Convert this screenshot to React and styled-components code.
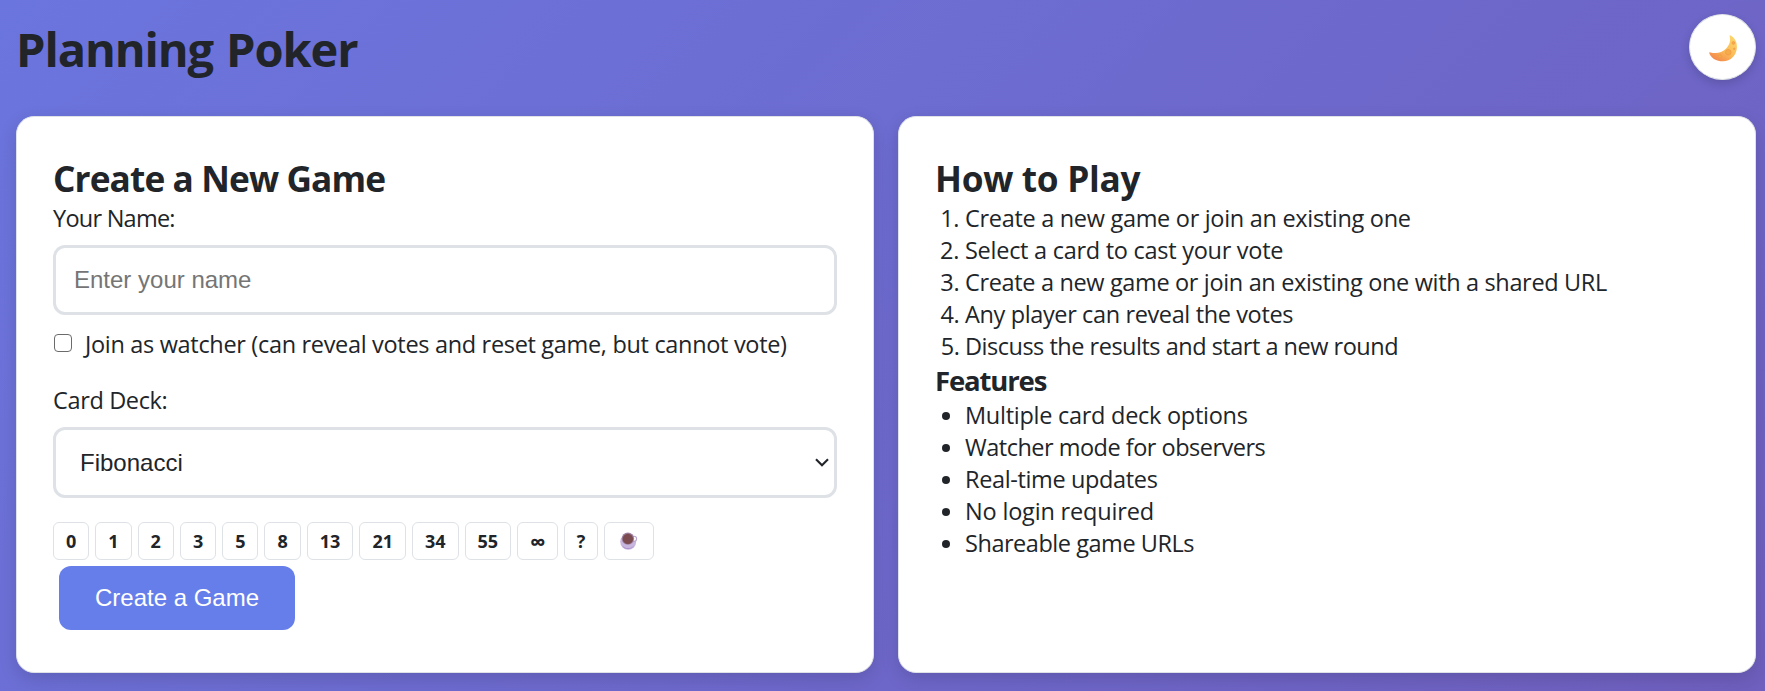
import React from 'react';
import styled, { createGlobalStyle } from 'styled-components';

const GlobalStyle = createGlobalStyle`
  *, *::before, *::after { box-sizing: border-box; }
  body {
    margin: 0;
    font-family: "Open Sans", "Noto Sans", sans-serif;
    font-size: 23.5px;
    line-height: 32px;
    color: #212529;
  }
`;

const Page = styled.main`
  min-height: 691px;
  padding: 14px 9px 18px 16px;
  background: linear-gradient(135deg, #6b75de 0%, #6f5fbe 100%);
`;

const Header = styled.header`
  display: flex;
  justify-content: space-between;
  height: 66px;
  margin-bottom: 36px;
`;

const Title = styled.h1`
  margin: 3px 0 0;
  font-size: 47px;
  line-height: 64px;
  font-weight: 700;
  letter-spacing: -1.1px;
  word-spacing: 2px;
`;

const ThemeButton = styled.button`
  display: flex;
  align-items: center;
  justify-content: center;
  width: 67px;
  height: 66px;
  padding: 0;
  border: 1px solid #dee2e6;
  border-radius: 50%;
  background: #fff;
  box-shadow: 0 4px 10px rgba(0, 0, 0, 0.15);
`;

const Columns = styled.div`
  display: grid;
  grid-template-columns: 1fr 1fr;
  gap: 24px;
`;

const Card = styled.section`
  height: 557px;
  padding: 37px 36px 36px;
  border: 1px solid #dee2e6;
  border-radius: 18px;
  background: #fff;
  box-shadow: 0 6px 18px rgba(0, 0, 0, 0.13);
`;

const Heading = styled.h2`
  margin: 0;
  font-size: 35.25px;
  line-height: 48px;
  letter-spacing: ${(p) => p.$track}px;
`;

const SubHeading = styled.h3`
  margin: 0;
  font-size: 27.5px;
  line-height: 37px;
  letter-spacing: -1.15px;
`;

const Label = styled.label`
  display: block;
  margin-bottom: 11px;
  letter-spacing: ${(p) => p.$track}px;
`;

const NameInput = styled.input`
  display: block;
  width: 100%;
  height: 70px;
  padding: 0 18px;
  border: 3px solid #dee2e6;
  border-radius: 12px;
  background: #fff;
  font: 24px "Liberation Sans", sans-serif;
  &::placeholder { color: #757575; }
`;

const WatcherRow = styled.label`
  display: flex;
  align-items: flex-start;
  margin: 13px 0 24px;
  letter-spacing: -0.32px;
  white-space: nowrap;
`;

const Checkbox = styled.input`
  appearance: none;
  width: 18px;
  height: 18px;
  margin: 6px 13px 0 1px;
  border: 1px solid #6b6b6b;
  border-radius: 4px;
  background: #fff;
`;

const SelectBox = styled.div`
  display: grid;
  align-items: center;
  margin-bottom: 24px;
  > * { grid-area: 1 / 1; }
  > svg { justify-self: end; margin-right: 8px; pointer-events: none; }
`;

const Select = styled.select`
  appearance: none;
  width: 100%;
  height: 71px;
  padding: 0 24px;
  border: 3px solid #dee2e6;
  border-radius: 12px;
  background: #fff;
  color: #212529;
  font: 24px "Liberation Sans", sans-serif;
`;

const Deck = styled.div`
  display: flex;
  gap: 6px;
  margin-bottom: 6px;
`;

const Chip = styled.span`
  display: flex;
  align-items: center;
  justify-content: center;
  width: ${(p) => (p.$width ? `${p.$width}px` : 'auto')};
  height: 38px;
  padding: ${(p) => (p.$width ? '0' : '0 12px')};
  border: 1px solid #dee2e6;
  border-radius: 6px;
  font-size: ${(p) => p.$size || 18}px;
  line-height: 36px;
  font-weight: 700;
`;

const CreateButton = styled.button`
  display: block;
  width: 236px;
  height: 64px;
  margin: 6px;
  padding: 0;
  border: 0;
  border-radius: 12px;
  background: #667eea;
  color: #fff;
  font: 24px "Liberation Sans", sans-serif;
`;

const listStyles = `
  margin: 0;
  padding-left: 30px;
`;
const Steps = styled.ol`${listStyles}`;
const Features = styled.ul`${listStyles}`;

const Item = styled.li`
  letter-spacing: ${(p) => p.$track}px;
`;

function Moon() {
  return (
    <svg width="30" height="30" viewBox="0 0 30 30">
      <defs>
        <linearGradient id="moon" x1="0.9" y1="0.1" x2="0.3" y2="1">
          <stop offset="0" stopColor="#fdd36b" />
          <stop offset="0.55" stopColor="#fbbb57" />
          <stop offset="1" stopColor="#f3894d" />
        </linearGradient>
      </defs>
      <path d="M22.4 3.4C26.3 5.2 29.2 9.6 28.9 15.2C28.6 23.4 22.6 29.2 15.2 29.3C8.5 29.4 3.2 26.6 1.2 21C1.1 20.2 1.7 20.1 2.5 20.4C8.2 22 14.2 20.6 18 16.8C21.6 13.2 22.9 8.6 21.6 4.1C21.5 3.5 21.9 3.2 22.4 3.4Z" fill="url(#moon)" />
      <g fill="#f6ab4a" stroke="#ef9a45" strokeWidth="0.7">
        <circle cx="20.3" cy="20.3" r="2.8" />
        <circle cx="25.4" cy="11" r="1.4" />
        <circle cx="12" cy="24.2" r="1.4" />
        <circle cx="26.2" cy="16.8" r="0.8" />
      </g>
    </svg>
  );
}

function Cup() {
  return (
    <svg width="18" height="18" viewBox="0 0 18 18">
      <circle cx="8.2" cy="9.8" r="8" fill="#c9b6de" />
      <path d="M2.2 13.2C5 17 11.5 17 14 13.2C12.5 18 4 18.6 2.2 13.2Z" fill="#a98fcd" />
      <circle cx="14" cy="6.8" r="2.6" fill="#fff" stroke="#b9a6cf" strokeWidth="1.1" />
      <circle cx="7.9" cy="6.6" r="6.2" fill="#9c7f9f" />
      <circle cx="7.9" cy="6.9" r="5.2" fill="#7c4b50" />
    </svg>
  );
}

const cards = ['0', '1', '2', '3', '5', '8', '13', '21', '34', '55'];

const steps = [
  ['Create a new game or join an existing one', -0.305],
  ['Select a card to cast your vote', -0.27],
  ['Create a new game or join an existing one with a shared URL', -0.347],
  ['Any player can reveal the votes', -0.373],
  ['Discuss the results and start a new round', -0.49],
];

const features = [
  ['Multiple card deck options', -0.27],
  ['Watcher mode for observers', -0.5],
  ['Real-time updates', -0.36],
  ['No login required', -0.18],
  ['Shareable game URLs', -0.46],
];

export default function App() {
  return (
    <>
      <GlobalStyle />
      <Page>
        <Header>
          <Title>Planning Poker</Title>
          <ThemeButton aria-label="Dark mode"><Moon /></ThemeButton>
        </Header>
        <Columns>
          <Card>
            <Heading $track={-0.9}>Create a New Game</Heading>
            <Label htmlFor="name" $track={-0.75}>Your Name:</Label>
            <NameInput id="name" placeholder="Enter your name" />
            <WatcherRow>
              <Checkbox type="checkbox" />
              Join as watcher (can reveal votes and reset game, but cannot vote)
            </WatcherRow>
            <Label htmlFor="deck" $track={-0.36}>Card Deck:</Label>
            <SelectBox>
              <Select id="deck"><option>Fibonacci</option></Select>
              <svg width="14" height="9" viewBox="0 0 14 9" fill="none" stroke="#212529" strokeWidth="2.1">
                <path d="M1 1.2L7 7.2L13 1.2" />
              </svg>
            </SelectBox>
            <Deck>
              {cards.map((c) => <Chip key={c}>{c}</Chip>)}
              <Chip $width={41} $size={22}>∞</Chip>
              <Chip $width={34}>?</Chip>
              <Chip $width={50}><Cup /></Chip>
            </Deck>
            <CreateButton>Create a Game</CreateButton>
          </Card>
          <Card>
            <Heading $track={-0.32}>How to Play</Heading>
            <Steps>
              {steps.map(([text, track]) => <Item key={text} $track={track}>{text}</Item>)}
            </Steps>
            <SubHeading>Features</SubHeading>
            <Features>
              {features.map(([text, track]) => <Item key={text} $track={track}>{text}</Item>)}
            </Features>
          </Card>
        </Columns>
      </Page>
    </>
  );
}
